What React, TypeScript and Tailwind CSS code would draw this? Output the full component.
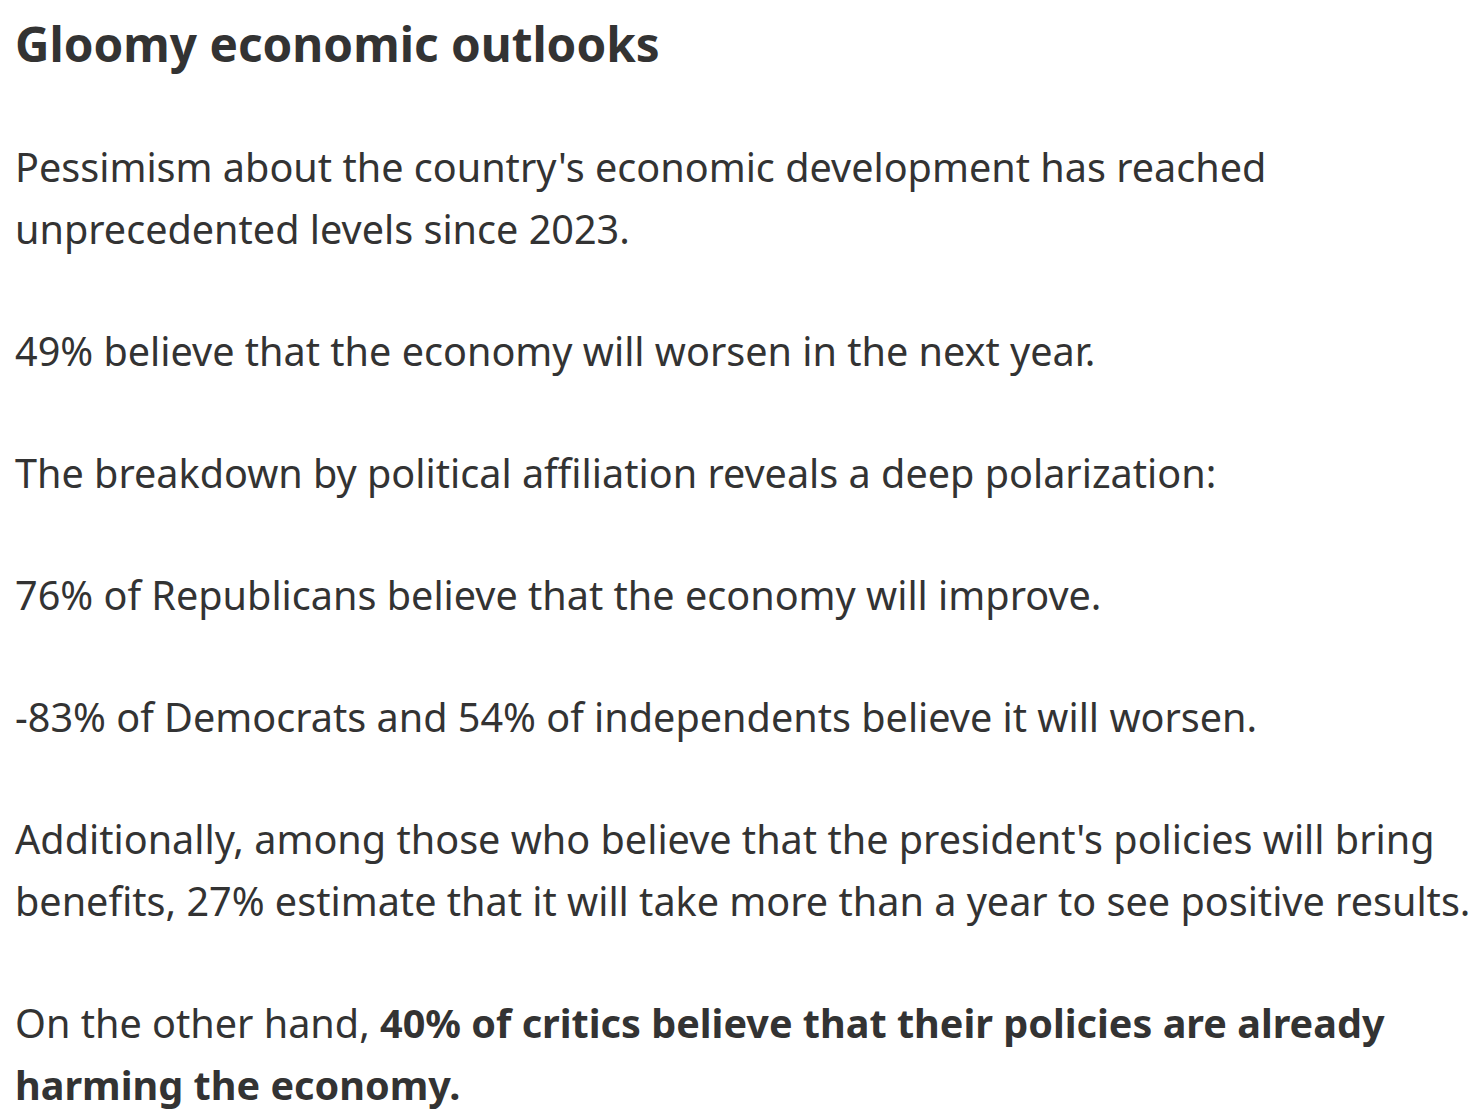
export default function App() {
  const paragraphs = [
    "Pessimism about the country's economic development has reached unprecedented levels since 2023.",
    '49% believe that the economy will worsen in the next year.',
    'The breakdown by political affiliation reveals a deep polarization:',
    '76% of Republicans believe that the economy will improve.',
    '-83% of Democrats and 54% of independents believe it will worsen.',
    "Additionally, among those who believe that the president's policies will bring benefits, 27% estimate that it will take more than a year to see positive results.",
  ];

  return (
    <div className="min-h-screen bg-white pl-[15px] pr-[4px] pt-[14px] text-[#333333] font-['Noto_Sans',sans-serif]">
      <h1 className="text-[47.7px] font-bold leading-[60px] mb-[62px]">Gloomy economic outlooks</h1>
      <div className="text-[39.6px] leading-[62px] space-y-[60px]">
        {paragraphs.map((p, i) => (
          <p key={i}>{p}</p>
        ))}
        <p>
          On the other hand, <strong className="font-bold">40% of critics believe that their policies are already harming the economy.</strong>
        </p>
      </div>
    </div>
  );
}
